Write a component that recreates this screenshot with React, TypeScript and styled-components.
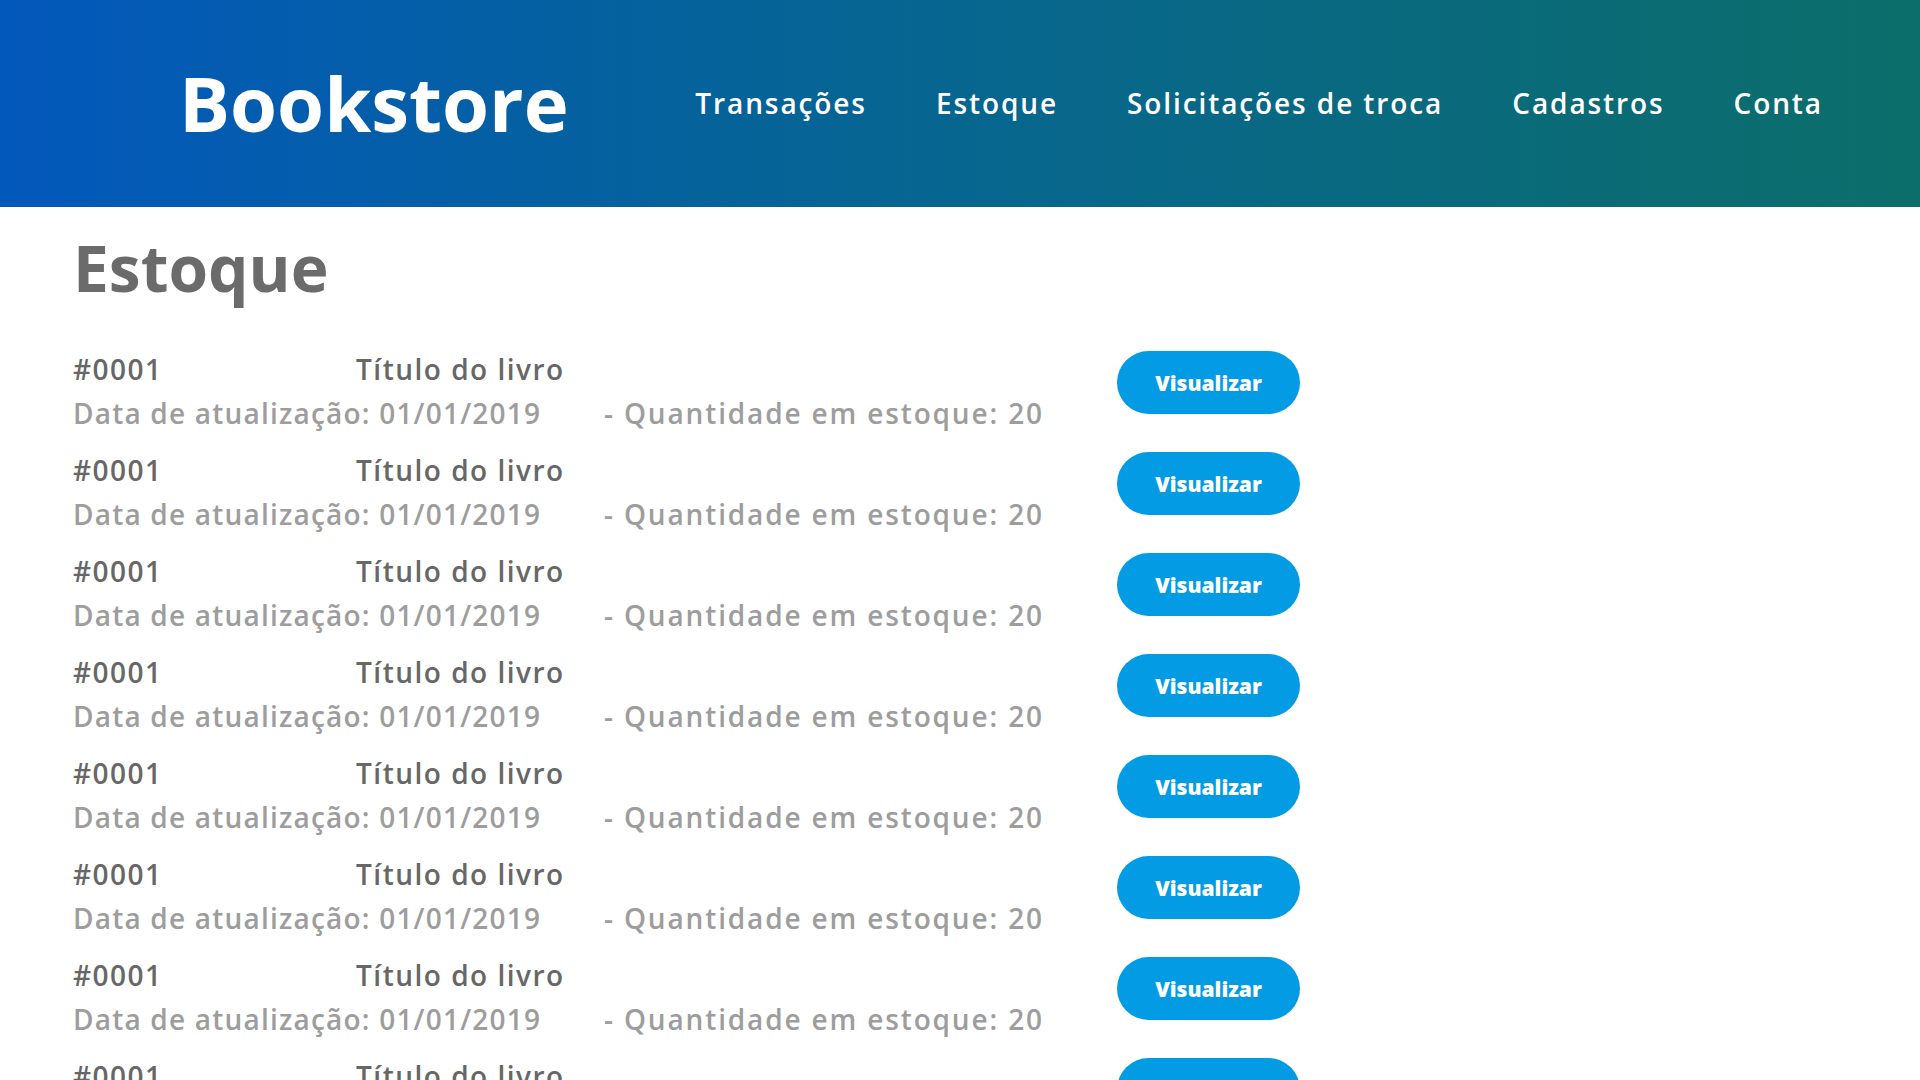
import { FC } from 'react'
import styled, { createGlobalStyle } from 'styled-components'

const GlobalStyle = createGlobalStyle`
    body{
        margin:0;
        background:#ffffff;
        font-family:"Open Sans", "Liberation Sans", sans-serif;
    }
    *{
        box-sizing:border-box;
    }
`;

const Header = styled.header`
    height:207px;
    display:flex;
    align-items:center;
    justify-content:space-between;
    padding:0 97px 2px 179px;
    background:linear-gradient(90deg, #0358bb 0%, #07668f 50%, #0c6e6a 100%);
`;

const Logo = styled.div`
    color:#ffffff;
    font-size:76px;
    font-weight:700;
    line-height:1;
`;

const Nav = styled.nav`
    display:flex;
    align-items:center;
    gap:69px;
`;

const NavLink = styled.a`
    color:#ffffff;
    font-size:28px;
    font-weight:600;
    letter-spacing:1.9px;
    text-decoration:none;
    cursor:pointer;
`;

const Main = styled.main`
    padding:29px 0 0 73px;
`;

const PageTitle = styled.h1`
    margin:0 0 47px;
    font-size:64px;
    line-height:64px;
    font-weight:700;
    color:#6b6b6b;
`;

const List = styled.div`
    display:flex;
    flex-direction:column;
    gap:13px;
`;

const Row = styled.div`
    display:flex;
    align-items:flex-start;
`;

const Info = styled.div`
    width:1044px;
    font-size:28px;
    line-height:44px;
    font-weight:600;
`;

const Line = styled.div<{ $muted?: boolean }>`
    display:flex;
    color:${p => p.$muted ? '#9d9d9d' : '#676767'};
    white-space:nowrap;
`;

const Cell = styled.span<{ $width?: number; $spacing: number }>`
    display:block;
    width:${p => p.$width ? `${p.$width}px` : 'auto'};
    letter-spacing:${p => p.$spacing}px;
`;

const ViewButton = styled.button`
    margin-top:4px;
    width:183px;
    height:63px;
    border:none;
    border-radius:32px;
    background:#049be5;
    color:#ffffff;
    font-family:"Open Sans", "Liberation Sans", sans-serif;
    font-size:21px;
    font-weight:800;
    cursor:pointer;
`;

interface StockItem {
    id: string
    title: string
    updatedAt: string
    quantity: number
}

const items: StockItem[] = Array.from({ length: 10 }, () => ({
    id: '#0001',
    title: 'Título do livro',
    updatedAt: '01/01/2019',
    quantity: 20,
}))

const StockRow: FC<{ item: StockItem }> = ({ item }) => {
    return (
        <Row>
            <Info>
                <Line>
                    <Cell $width={283} $spacing={1.5}>{item.id}</Cell>
                    <Cell $spacing={1.5}>{item.title}</Cell>
                </Line>
                <Line $muted>
                    <Cell $width={531} $spacing={1.2}>Data de atualização: {item.updatedAt}</Cell>
                    <Cell $spacing={1.85}>- Quantidade em estoque: {item.quantity}</Cell>
                </Line>
            </Info>
            <ViewButton>Visualizar</ViewButton>
        </Row>
    )
}

const App: FC = () => {
    return (
        <>
            <GlobalStyle />
            <Header>
                <Logo>Bookstore</Logo>
                <Nav>
                    <NavLink>Transações</NavLink>
                    <NavLink>Estoque</NavLink>
                    <NavLink>Solicitações de troca</NavLink>
                    <NavLink>Cadastros</NavLink>
                    <NavLink>Conta</NavLink>
                </Nav>
            </Header>
            <Main>
                <PageTitle>Estoque</PageTitle>
                <List>
                    {items.map((item, i) => <StockRow key={i} item={item} />)}
                </List>
            </Main>
        </>
    )
}

export default App
